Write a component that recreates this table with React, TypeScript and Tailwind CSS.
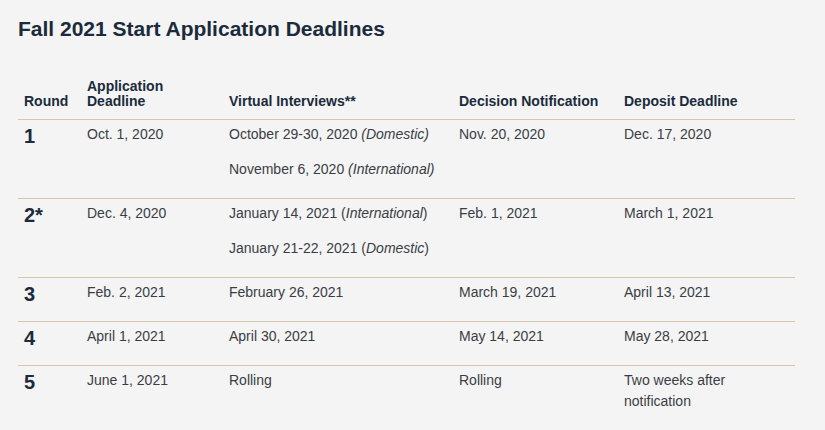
import React from "react";

const navy = "text-[#1b2b3b]";

type Row = {
  n: string;
  app: React.ReactNode;
  vi: React.ReactNode[];
  dec: React.ReactNode;
  dep: React.ReactNode;
};

const rows: Row[] = [
  {
    n: "1",
    app: "Oct. 1, 2020",
    vi: [
      <>October 29-30, 2020 <i>(Domestic)</i></>,
      <>November 6, 2020 <i>(International)</i></>,
    ],
    dec: "Nov. 20, 2020",
    dep: "Dec. 17, 2020",
  },
  {
    n: "2*",
    app: "Dec. 4, 2020",
    vi: [
      <>January 14, 2021 (<i>International</i>)</>,
      <>January 21-22, 2021 (<i>Domestic</i>)</>,
    ],
    dec: "Feb. 1, 2021",
    dep: "March 1, 2021",
  },
  { n: "3", app: "Feb. 2, 2021", vi: ["February 26, 2021"], dec: "March 19, 2021", dep: "April 13, 2021" },
  { n: "4", app: "April 1, 2021", vi: ["April 30, 2021"], dec: "May 14, 2021", dep: "May 28, 2021" },
  { n: "5", app: "June 1, 2021", vi: ["Rolling"], dec: "Rolling", dep: "Two weeks after notification" },
];

function Cell({ children }: { children: React.ReactNode }) {
  return (
    <td className="align-top pl-[6px] pr-[6px] pt-[4px] pb-[3px]">
      <p className="mb-[15px] leading-[21px]">{children}</p>
    </td>
  );
}

export default function App() {
  return (
    <div
      className="w-[825px] h-[430px] bg-[#f4f4f4] px-[18px] pt-[18px] overflow-hidden"
      style={{ fontFamily: '"Liberation Sans", Arial, sans-serif' }}
    >
      <h2 className={`text-[21px] leading-[21px] font-bold ${navy} mb-[40px]`}>
        Fall 2021 Start Application Deadlines
      </h2>
      <table className="table-fixed border-collapse w-[777px] text-[14px] text-[#3a3e44]">
        <colgroup>
          <col className="w-[63px]" />
          <col className="w-[142px]" />
          <col className="w-[230px]" />
          <col className="w-[165px]" />
          <col className="w-[177px]" />
        </colgroup>
        <thead>
          <tr className="border-b border-[#d7c6a9]">
            {["Round", "Application Deadline", "Virtual Interviews**", "Decision Notification", "Deposit Deadline"].map(
              (h, i) => (
                <th
                  key={i}
                  className={`text-left align-bottom font-bold ${navy} leading-[15px] pl-[6px] pr-[6px] pb-[10px] ${
                    i === 1 ? "pr-[60px]" : ""
                  }`}
                >
                  {h}
                </th>
              )
            )}
          </tr>
        </thead>
        <tbody>
          {rows.map((r, idx) => (
            <tr key={idx} className={idx < rows.length - 1 ? "border-b border-[#d7c6a9]" : ""}>
              <td className="align-top pl-[6px] pt-[4px]">
                <span className={`block text-[20px] leading-[24px] font-bold ${navy}`}>{r.n}</span>
              </td>
              <Cell>{r.app}</Cell>
              <td className="align-top pl-[6px] pr-[6px] pt-[4px] pb-[3px]">
                {r.vi.map((v, i) => (
                  <p key={i} className={`leading-[21px] ${i === r.vi.length - 1 ? "mb-[15px]" : "mb-[14px]"}`}>
                    {v}
                  </p>
                ))}
              </td>
              <Cell>{r.dec}</Cell>
              <td className="align-top pl-[6px] pr-[40px] pt-[4px] pb-[3px]">
                <p className="mb-[15px] leading-[21px]">{r.dep}</p>
              </td>
            </tr>
          ))}
        </tbody>
      </table>
    </div>
  );
}
